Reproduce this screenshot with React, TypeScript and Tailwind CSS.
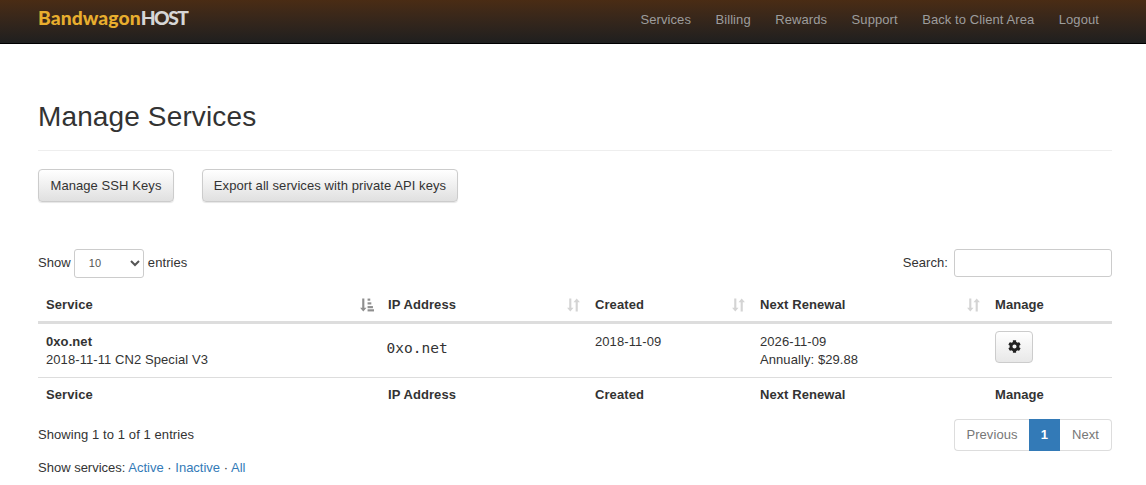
import React from 'react';
import { FaCog } from 'react-icons/fa';

const NAV_LINKS = ['Services', 'Billing', 'Rewards', 'Support', 'Back to Client Area', 'Logout'];

const COLUMNS = [
  { label: 'Service', width: 'w-[342px]', sorted: true },
  { label: 'IP Address', width: 'w-[207px]' },
  { label: 'Created', width: 'w-[165px]' },
  { label: 'Next Renewal', width: 'w-[235px]' },
  { label: 'Manage', width: 'w-[125px]', noSort: true },
];

// both arrows, used on columns that are not the active sort
const SortIcon: React.FC = () => (
  <svg width="15" height="16" viewBox="0 0 14 14" className="text-[#d4d4d4]" fill="currentColor">
    <path d="M3 1h2v8.500h2L4 13 1 9.500h2z" />
    <path d="M10 1l3 3.500h-2V13H9V4.500H7z" />
  </svg>
);

// active sort: down arrow plus widening bars
const SortedIcon: React.FC = () => (
  <svg width="15" height="16" viewBox="0 0 14 14" className="text-[#8f8f8f]" fill="currentColor">
    <path d="M3 1h2v8.500h2L4 13 1 9.500h2z" />
    <rect x="8" y="1" width="2.500" height="2" />
    <rect x="8" y="4.500" width="3.500" height="2" />
    <rect x="8" y="8" width="5" height="2" />
    <rect x="8" y="11" width="6" height="2" />
  </svg>
);

const Button: React.FC<{ children: React.ReactNode; className?: string }> = ({ children, className }) => (
  <button
    className={`h-[33px] rounded-[4px] border border-[#ccc] bg-gradient-to-b from-white to-[#e0e0e0] text-[13px] text-[#333] shadow-[0_1px_1px_rgba(0,0,0,0.1)] ${className ?? ''}`}
  >
    {children}
  </button>
);

const App: React.FC = () => {
  return (
    <div className="min-h-[485px] bg-white font-['Liberation_Sans',Arial,sans-serif] text-[13px] leading-[18px] tracking-[0.08px] text-[#333]">
      {/* Navbar */}
      <header className="flex h-[44px] items-center justify-between border-b border-black bg-gradient-to-b from-[#4a2c14] to-[#1f1f1f] pl-[38px] pr-[47px]">
        <div className="mt-[-7px] font-['Lato',sans-serif] text-[19.300px] font-black leading-none">
          <span className="text-[#e8ae2e]">Bandwagon</span>
          <span className="tracking-[-1.500px] text-[#d6d6d6]">HOST</span>
        </div>
        <nav className="mt-[-4px] flex gap-[24.500px]">
          {NAV_LINKS.map(link => (
            <a key={link} className="text-[13px] text-[#9d9d9d]">
              {link}
            </a>
          ))}
        </nav>
      </header>

      <main className="pl-[38px] pr-[34px]">
        <h1 className="mt-[53px] text-[28px] font-normal leading-[39px] tracking-[0.13px] text-[#333]">Manage Services</h1>
        <hr className="mt-[14px] border-[#eee]" />

        <div className="mt-[18px] flex gap-[28px]">
          <Button className="w-[136px]">Manage SSH Keys</Button>
          <Button className="w-[256px]">Export all services with private API keys</Button>
        </div>

        {/* Table controls */}
        <div className="mt-[46px] flex h-[30px] items-center justify-between">
          <div className="flex items-center gap-[3px]">
            <span>Show</span>
            <select className="h-[29px] w-[70px] rounded-[3px] border border-[#ccc] bg-white pl-[10px] text-[11px] text-[#555]">
              <option>10</option>
            </select>
            <span className="ml-[1px]">entries</span>
          </div>
          <label className="flex items-center gap-[6px]">
            Search:
            <input className="h-[28px] w-[158px] rounded-[3px] border border-[#ccc] bg-white" />
          </label>
        </div>

        {/* Services table */}
        <table className="mt-[8px] w-[1074px] table-fixed border-collapse">
          <thead>
            <tr className="h-[36px] border-b-[3px] border-[#ddd]">
              {COLUMNS.map(col => (
                <th key={col.label} className={`${col.width} pl-[8px] pr-[6px] pt-[4px] text-left font-bold`}>
                  <div className="flex items-center justify-between">
                    <span>{col.label}</span>
                    {col.sorted ? <SortedIcon /> : col.noSort ? null : <SortIcon />}
                  </div>
                </th>
              ))}
            </tr>
          </thead>
          <tbody>
            <tr className="h-[55px] border-b border-[#ddd] align-top">
              <td className="px-[8px] pt-[9px]">
                <div className="font-bold">0xo.net</div>
                <div>2018-11-11 CN2 Special V3</div>
              </td>
              <td className="pl-[6.500px] pr-[7px] pt-[15px]">
                <span className="font-['DejaVu_Sans_Mono',monospace] text-[14.500px] tracking-normal">0xo.net</span>
              </td>
              <td className="px-[8px] pt-[9px]">2018-11-09</td>
              <td className="px-[8px] pt-[9px]">
                <div>2026-11-09</div>
                <div>Annually: $29.88</div>
              </td>
              <td className="px-[8px] pt-[7px]">
                <button className="flex h-[32px] w-[38px] items-center justify-center rounded-[4px] border border-[#ccc] bg-gradient-to-b from-white to-[#e8e8e8] text-[#222]">
                  <FaCog size={13} />
                </button>
              </td>
            </tr>
          </tbody>
          <tfoot>
            <tr className="h-[35px]">
              {COLUMNS.map(col => (
                <th key={col.label} className="px-[8px] text-left font-bold">
                  {col.label}
                </th>
              ))}
            </tr>
          </tfoot>
        </table>

        {/* Info and pagination */}
        <div className="mt-[7px] flex w-[1074px] items-center justify-between">
          <span>Showing 1 to 1 of 1 entries</span>
          <div className="flex h-[32px] items-stretch">
            <a className="flex w-[75px] items-center justify-center rounded-l-[4px] border border-r-0 border-[#ddd] text-[#777]">
              Previous
            </a>
            <a className="flex w-[31px] items-center justify-center border border-[#337ab7] bg-[#337ab7] font-bold text-white">
              1
            </a>
            <a className="flex w-[52px] items-center justify-center rounded-r-[4px] border border-l-0 border-[#ddd] text-[#777]">
              Next
            </a>
          </div>
        </div>

        <p className="mt-[8px] tracking-normal">
          Show services: <a className="text-[#337ab7]">Active</a> · <a className="text-[#337ab7]">Inactive</a> ·{' '}
          <a className="text-[#337ab7]">All</a>
        </p>
      </main>
    </div>
  );
};

export default App;
